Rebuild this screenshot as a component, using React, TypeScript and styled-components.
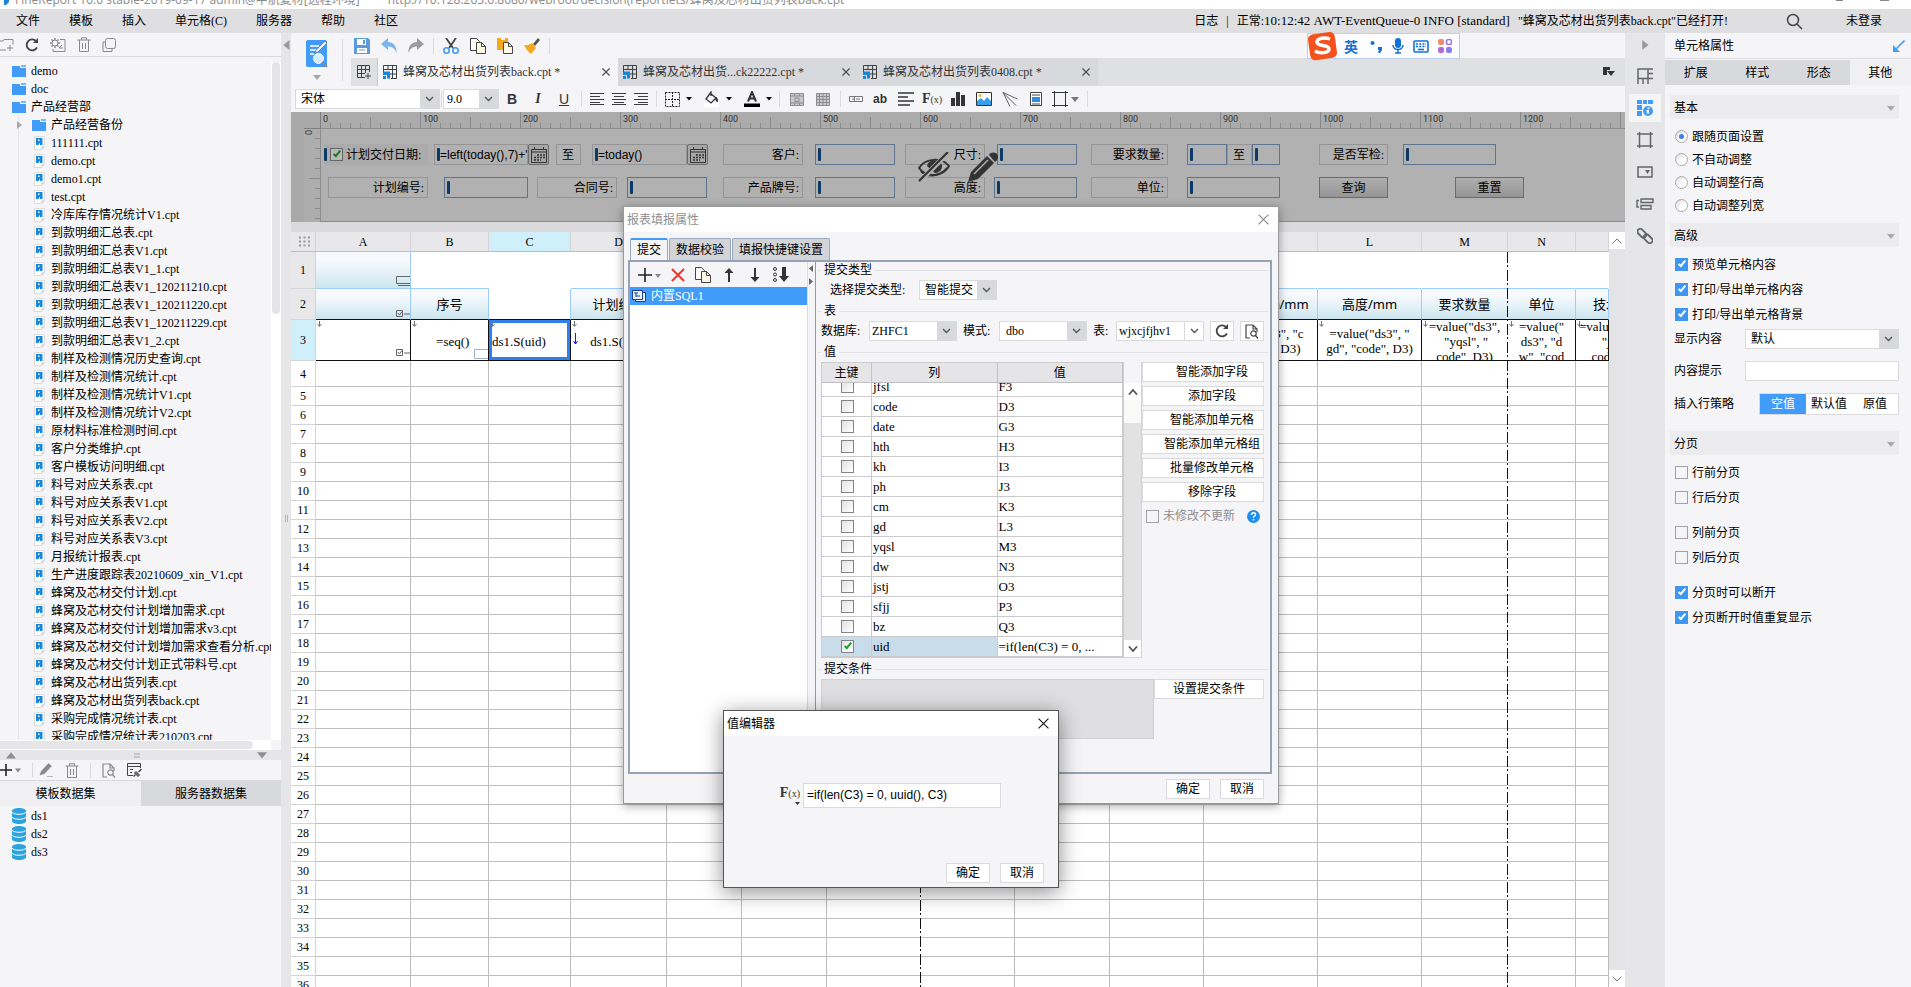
import React from "react";
import styled, { createGlobalStyle, css } from "styled-components";

const GlobalStyle = createGlobalStyle`
  *, *::before, *::after { box-sizing: border-box; }
  html, body { margin: 0; padding: 0; }
  body, button, input, select, textarea, table {
    font-family: "Liberation Serif", "Noto Sans CJK SC", sans-serif;
    font-size: 12px;
    line-height: 16px;
    color: #000;
  }
  button { background: none; border: 0; padding: 0; cursor: pointer; white-space: nowrap; }
  svg { display: block; flex: none; }
`;

const c = {
  panel: "#f5f5f7",
  bar: "#dfdfe1",
  strip: "#e6e6e8",
  tab: "#d8d9dd",
  line: "#dadadd",
  blue: "#419bf9",
  ink: "#333436",
};

/* ---------- page frame ---------- */

const Page = styled.div`
  position: relative;
  display: flex;
  flex-direction: column;
  height: 100vh;
  overflow: hidden;
  background: ${c.panel};
`;
const TitleBar = styled.header`
  flex: none;
  display: flex;
  align-items: flex-end;
  gap: 4px;
  height: 9px;
  overflow: hidden;
  background: #fff;
  color: #8b8b8b;
  font-family: "Open Sans", "Noto Sans CJK SC", sans-serif;
  white-space: pre;
  line-height: 18px;
`;
const TitleLogo = styled.svg`
  margin-bottom: 4px;
`;
const TitleText = styled.span`
  flex: 1;
`;
const WindowMarks = styled.svg`
  margin: 0 20px 7px 0;
`;
const MenuBar = styled.nav`
  flex: none;
  display: flex;
  align-items: center;
  height: 24px;
  padding: 0 29px 0 16px;
  background: ${c.bar};
`;
const MenuItem = styled.button`
  margin-right: 29px;
`;
const Log = styled.div`
  display: flex;
  gap: 8px;
  margin-left: auto;
  white-space: nowrap;
`;
const LogCode = styled.span`
  font-size: 13px;
`;
const SearchButton = styled.button`
  margin: 0 43px 0 58px;
`;
const Main = styled.main`
  flex: 1;
  display: flex;
  min-height: 0;
`;

/* ---------- left side ---------- */

const LeftSide = styled.aside`
  flex: none;
  display: flex;
  flex-direction: column;
  width: 281px;
`;
const LeftTools = styled.div`
  flex: none;
  display: flex;
  align-items: center;
  gap: 11px;
  height: 24px;
  border-bottom: 1px solid ${c.line};
  color: #8d8d8f;
`;
const TreeArea = styled.div`
  flex: 1;
  display: flex;
  min-height: 0;
  padding-top: 5px;
`;
const TreeList = styled.ul<{ $guide?: boolean }>`
  flex: 1;
  min-width: 0;
  margin: 0;
  padding: 0;
  list-style: none;
  overflow: hidden;
  background: ${(p) => (p.$guide ? "linear-gradient(#e6e6ea, #e6e6ea) 18px 54px / 1px 100% no-repeat" : "none")};
`;
const TreeRow = styled.li<{ $depth: number }>`
  display: flex;
  align-items: center;
  height: 18px;
  padding-left: ${(p) => (p.$depth ? 16 : 0)}px;
  white-space: nowrap;
`;
const TreeTwist = styled.span<{ $root?: boolean }>`
  flex: none;
  width: ${(p) => (p.$root ? 12 : 16)}px;
`;
const TreeName = styled.span`
  margin-left: 5px;
`;
const ScrollTrack = styled.div`
  flex: none;
  width: 10px;
  background: #fff;
`;
const ScrollThumb = styled.div`
  width: 8px;
  height: 252px;
  margin-left: 1px;
  border-radius: 4px;
  background: #e4e4e6;
`;
const HScroll = styled.div`
  flex: none;
  height: 10px;
  margin-right: 10px;
  background: #fff;
`;
const HThumb = styled.div`
  width: 253px;
  height: 8px;
  margin-top: 1px;
  border-radius: 0 4px 4px 0;
  background: #e6e6e8;
`;
const Splitter = styled.div`
  flex: none;
  display: flex;
  align-items: center;
  justify-content: space-between;
  height: 10px;
  padding: 0 14px 0 6px;
  background: #e6e6e8;
`;
const DataPane = styled.section`
  flex: none;
  height: 227px;
`;
const DataTools = styled.div`
  display: flex;
  align-items: center;
  height: 20px;
  gap: 11px;
  color: #8a8a8c;
`;
const DataTabs = styled.div`
  display: flex;
  height: 26px;
  border-top: 1px solid ${c.line};
  margin-bottom: 1px;
`;
const DataTab = styled.button<{ $off?: boolean }>`
  flex: ${(p) => (p.$off ? 145 : 136)};
  padding-right: ${(p) => (p.$off ? 0 : 10)}px;
  background: ${(p) => (p.$off ? c.tab : "#f0f0f2")};
`;
const Gutter = styled.div`
  flex: none;
  display: flex;
  flex-direction: column;
  align-items: center;
  width: 10px;
  padding-top: 7px;
  background: ${c.strip};
`;
const GutterGrip = styled.span`
  width: 3px;
  height: 7px;
  margin: auto 0;
  border: solid #b4b4b6;
  border-width: 0 1px;
`;

/* ---------- designer ---------- */

const Designer = styled.section`
  flex: 1;
  display: flex;
  flex-direction: column;
  min-width: 0;
  overflow: hidden;
`;
const TopTools = styled.div`
  flex: none;
  display: flex;
  height: 53px;
`;
const PreviewBlock = styled.div`
  flex: none;
  display: flex;
  flex-direction: column;
  align-items: center;
  gap: 6px;
  width: 52px;
  margin: 6px 8px 5px 0;
  border-right: 1px solid ${c.line};
`;
const TopRight = styled.div`
  flex: 1;
  min-width: 0;
`;
const ToolRow = styled.div`
  display: flex;
  align-items: center;
  gap: 11px;
  height: 25px;
  padding-left: 3px;
`;
const Sep = styled.span<{ $m?: number }>`
  flex: none;
  width: 1px;
  height: 16px;
  margin: 0 ${(p) => p.$m ?? 4}px;
  background: ${c.line};
`;
const TabStrip = styled.div`
  display: flex;
  height: 28px;
  background: #dfe0e2;
`;
const NewTab = styled.button`
  display: grid;
  place-items: center;
  width: 27px;
  border-right: 1px solid #c9cacd;
`;
const FileTab = styled.div<{ $active?: boolean }>`
  display: flex;
  align-items: center;
  gap: 6px;
  width: 240px;
  padding: 0 8px 0 5px;
  background: ${(p) => (p.$active ? c.panel : c.tab)};
  color: ${c.ink};
  white-space: nowrap;
`;
const FileTabClose = styled.button`
  display: grid;
  margin-left: auto;
`;
const TabMenu = styled.button`
  margin: 0 10px 0 auto;
`;
const FormatBar = styled.div`
  flex: none;
  display: flex;
  align-items: center;
  height: 26px;
  padding-left: 4px;
`;
const FormatButton = styled.button<{ $w?: number }>`
  flex: none;
  display: grid;
  place-items: center;
  width: ${(p) => p.$w ?? 26}px;
  height: 20px;
`;
const ArrowGroup = styled.span<{ $first?: boolean }>`
  display: flex;
  margin-left: ${(p) => (p.$first ? 0 : 6)}px;
`;
const Letter = styled.b<{ $kind?: "i" | "u" | "ab" }>`
  font-family: "Liberation Sans", sans-serif;
  font-size: 14px;
  color: ${c.ink};
  ${(p) => p.$kind === "i" && css`font-family: "Liberation Serif", serif; font-style: italic;`}
  ${(p) => p.$kind === "u" && css`font-weight: 400; text-decoration: underline;`}
  ${(p) => p.$kind === "ab" && css`font-size: 12px;`}
`;
const Fx = styled.span`
  font-family: "Liberation Serif", serif;
  font-size: 14px;
  font-weight: 700;
  color: ${c.ink};
  small { font-size: 10px; font-weight: 400; }
`;

/* ---------- combo box ---------- */

const ComboBox = styled.span<{ $w?: number }>`
  flex: none;
  display: flex;
  width: ${(p) => (p.$w ? p.$w + "px" : "auto")};
  height: 20px;
  border: 1px solid ${c.line};
  background: #fff;
`;
const ComboSelect = styled.select<{ $pad: number }>`
  flex: 1;
  width: 0;
  min-width: 0;
  appearance: none;
  border: 0;
  padding: 0 0 0 ${(p) => p.$pad}px;
  background: transparent;
  outline: 0;
`;
const ComboArrow = styled.span<{ $plain?: boolean }>`
  display: grid;
  place-items: center;
  width: 19px;
  background: ${(p) => (p.$plain ? "#fff" : c.tab)};
  border-left: ${(p) => (p.$plain ? "1px solid " + c.line : 0)};
`;
function Combo(p: { label: string; value: string; w?: number; pad?: number; plain?: boolean }) {
  return (
    <ComboBox $w={p.w}>
      <ComboSelect aria-label={p.label} $pad={p.pad ?? 5}>
        <option>{p.value}</option>
      </ComboSelect>
      <ComboArrow $plain={p.plain}>
        <svg width="9" height="6" viewBox="0 0 9 6" fill="none" stroke="#555" strokeWidth="1.4">
          <path d="M1 1l3.500 3.500L8 1" />
        </svg>
      </ComboArrow>
    </ComboBox>
  );
}

/* ---------- parameter panel ---------- */

const ParamPanel = styled.div`
  position: relative;
  flex: none;
  display: grid;
  grid-template: 17px 93px / 13px 17px 1fr;
  height: 110px;
  background: #a9a9a9;
`;
const RulerCorner = styled.div`
  grid-column: 2;
  border: solid #7e7e7e;
  border-width: 0 1px 1px 0;
`;
const TopRuler = styled.div`
  display: flex;
  overflow: hidden;
  min-width: 0;
  border-bottom: 1px solid #8d8d8d;
  font-family: "Roboto", sans-serif;
  font-size: 9px;
  line-height: 14px;
  color: #333;
  background-image:
    repeating-linear-gradient(90deg, #888 0 1px, transparent 1px 100px),
    repeating-linear-gradient(90deg, #8c8c8c 0 1px, transparent 1px 50px),
    repeating-linear-gradient(90deg, #8c8c8c 0 1px, transparent 1px 10px);
  background-size: 100% 16px, 100% 11px, 100% 5px;
  background-position: -1px 0, -1px 5px, -1px 11px;
  background-repeat: no-repeat;
  background-color: #ababab;
`;
const RulerLabel = styled.span`
  flex: none;
  width: 100px;
  padding-left: 2px;
`;
const SideRuler = styled.div`
  grid-column: 2;
  display: flex;
  justify-content: center;
  padding-right: 6px;
  font-family: "Roboto", sans-serif;
  font-size: 9px;
  line-height: 8px;
  color: #333;
  background:
    repeating-linear-gradient(#8c8c8c 0 1px, transparent 1px 10px) 100% 9px / 5px 100% no-repeat,
    repeating-linear-gradient(#8c8c8c 0 1px, transparent 1px 50px) 100% 49px / 11px 100% no-repeat #adadad;
  border-right: 1px solid #8d8d8d;
`;
const SideLabel = styled.span`
  writing-mode: vertical-rl;
  transform: rotate(180deg);
  height: 6px;
`;
const Canvas = styled.div`
  min-width: 0;
  overflow: hidden;
  padding-top: 15px;
  background: #b1b1b1;
  border-bottom: 1px solid #8a8a8a;
`;
const WidgetRow = styled.div`
  display: flex;
  height: 21px;
  margin-bottom: 12px;
`;
interface WidgetProps { $w: number; $gap?: number }
const widget = css<WidgetProps>`
  flex: none;
  width: ${(p) => p.$w}px;
  margin-left: ${(p) => p.$gap ?? 0}px;
`;
const WidgetLabel = styled.label<WidgetProps>`
  ${widget}
  padding-right: 3px;
  line-height: 20px;
  text-align: right;
  border: 1px solid #959595;
`;
const WidgetCheck = styled.label<WidgetProps>`
  ${widget}
  display: flex;
  align-items: center;
  gap: 3px;
  background: #ababab;
`;
const WidgetBox = styled.span<WidgetProps & { $soft?: boolean }>`
  ${widget}
  display: flex;
  align-items: center;
  border: 1px solid ${(p) => (p.$soft ? "#959595" : "#5f7491")};
  padding-left: 2px;
`;
const Anchor = styled.i`
  flex: none;
  width: 3px;
  height: 13px;
  border-radius: 1px;
  background: #0d3a66;
`;
const WidgetInput = styled.input`
  flex: 1;
  width: 0;
  min-width: 0;
  border: 0;
  padding: 0;
  background: transparent;
  font-family: "Liberation Sans", sans-serif;
  outline: 0;
`;
const DateButton = styled.button`
  flex: none;
  display: grid;
  place-items: center;
  width: 21px;
  border: 1px solid #6a6a6a;
  border-radius: 2px;
  background: #a6a6a6;
`;
const WidgetButton = styled.button<WidgetProps>`
  ${widget}
  border: 1px solid #6b6b6b;
  background: linear-gradient(#aeaeae, #959595);
`;
const HoverTools = styled.div`
  position: absolute;
  inset: 0;
  display: flex;
  align-items: center;
  justify-content: center;
  gap: 18px;
`;
function Field(p: { label: string; w: number; gap?: number; value?: string; soft?: boolean }) {
  return (
    <WidgetBox $w={p.w} $gap={p.gap} $soft={p.soft}>
      <Anchor />
      <WidgetInput aria-label={p.label} defaultValue={p.value} />
    </WidgetBox>
  );
}

/* ---------- tick boxes and radios ---------- */

const GreenCheck = styled.input`
  appearance: none;
  flex: none;
  display: block;
  width: 13px;
  height: 13px;
  margin: 0;
  border: 1px solid #858585;
  background: linear-gradient(135deg, #e2e2e2, #fff);
  &:checked::after {
    content: "";
    display: block;
    width: 4px;
    height: 8px;
    margin: 0 0 0 4px;
    border: solid #22a02c;
    border-width: 0 2px 2px 0;
    transform: rotate(40deg);
  }
`;
const MutedCheck = styled(GreenCheck)`
  border-color: #666;
  background: #b9b9b9;
  &:checked::after { border-color: #167a20; }
`;
const PanelCheck = styled.input`
  appearance: none;
  flex: none;
  width: 13px;
  height: 13px;
  margin: 0;
  border: 1px solid #a2a2a4;
  background: ${c.panel};
  &:checked { background: #3d97f2; border-color: #3d97f2; }
  &:checked::after {
    content: "";
    display: block;
    width: 4px;
    height: 8px;
    margin: 0 0 0 4px;
    border: solid #fff;
    border-width: 0 2px 2px 0;
    transform: rotate(40deg);
  }
`;
const PanelRadio = styled.input`
  appearance: none;
  flex: none;
  display: grid;
  place-items: center;
  width: 13px;
  height: 13px;
  margin: 0;
  border: 1px solid #a9a9a9;
  border-radius: 50%;
  background: linear-gradient(135deg, #dcdcdc, #fff 60%);
  &:checked::after {
    content: "";
    width: 5px;
    height: 5px;
    border-radius: 50%;
    background: #3b82ef;
  }
`;

/* ---------- sheet ---------- */

const SheetArea = styled.div`
  flex: 1;
  display: flex;
  min-height: 0;
  border-top: 10px solid #dadadd;
`;
const SheetView = styled.div`
  position: relative;
  flex: 1;
  min-width: 0;
  overflow: hidden;
  background: #fff;
`;
const Sheet = styled.table`
  width: 100%;
  table-layout: fixed;
  border-collapse: separate;
  border-spacing: 0;
  td, th { padding: 0; font-weight: 400; overflow: hidden; }
`;
const ColHead = styled.th<{ $hot?: boolean }>`
  height: 20px;
  border: solid #d4d4d6;
  border-width: 0 1px 1px 0;
  border-bottom-color: #bdbdbf;
  background: ${(p) => (p.$hot ? "#cfeffb" : "#e8e8ea")};
`;
const RowHead = styled.th<{ $h: number; $tone?: "gray" | "hot" }>`
  height: ${(p) => p.$h}px;
  border: solid #d4d4d6;
  border-width: 0 1px 1px 0;
  background: ${(p) => (p.$tone === "gray" ? "#e8e8ea" : p.$tone === "hot" ? "#cfeffb" : "#fff")};
`;
type CellKind = "grid" | "blank" | "title" | "code";
const Cell = styled.td<{ $kind: CellKind; $bottom?: string; $right?: string }>`
  position: relative;
  border: solid #bdbdbd;
  border-width: 0 1px 1px 0;
  text-align: center;
  white-space: pre;
  ${(p) => p.$kind === "blank" && css`border-color: #fff;`}
  ${(p) =>
    p.$kind === "title" &&
    css`
      border-color: #9fcdfb;
      background: linear-gradient(#f6fafe 20%, #e4f1f7 60%, #cbe5ee);
      font-family: "Noto Sans", "Noto Sans CJK SC", sans-serif;
      font-size: 13px;
    `}
  ${(p) =>
    p.$kind === "code" &&
    css`
      border-color: #111;
      font-size: 13px;
      line-height: 15px;
    `}
  ${(p) => p.$bottom && css`border-bottom-color: ${p.$bottom};`}
  ${(p) => p.$right && css`border-right-color: ${p.$right};`}
`;
const CodeText = styled.div<{ $align?: "left" | "center" }>`
  height: 40px;
  display: flex;
  align-items: center;
  justify-content: ${(p) => (p.$align === "left" ? "flex-start" : "center")};
  padding: 2px 3px 0;
  overflow: hidden;
`;
const CellMark = styled.span<{ $at: "tl" | "br" | "ml" }>`
  position: absolute;
  ${(p) => p.$at === "tl" && css`left: 1px; top: 1px;`}
  ${(p) => p.$at === "ml" && css`left: 2px; top: 13px;`}
  ${(p) => p.$at === "br" && css`right: 0; bottom: 1px;`}
`;
const Selection = styled.span`
  position: absolute;
  inset: 0;
  border: 3px solid #2f80ed;
`;
const PageBreak = styled.i<{ $x: number }>`
  position: absolute;
  left: ${(p) => p.$x}px;
  top: 20px;
  bottom: 0;
  width: 1px;
  background: repeating-linear-gradient(#111 0 11px, #fff 11px 13px, #111 13px 15px, #fff 15px 18px);
`;
const SheetScroll = styled.div`
  flex: none;
  display: flex;
  flex-direction: column;
  width: 16px;
  background: #e4e4e6;
`;
const ScrollButton = styled.button<{ $last?: boolean }>`
  display: grid;
  place-items: center;
  height: 17px;
  margin-top: ${(p) => (p.$last ? "auto" : 0)};
  background: #fff;
`;

/* ---------- right side ---------- */

const IconStrip = styled.nav`
  flex: none;
  display: flex;
  flex-direction: column;
  align-items: center;
  width: 40px;
  padding-top: 7px;
  background: ${c.strip};
`;
const StripButton = styled.button<{ $on?: boolean }>`
  display: grid;
  place-items: center;
  width: 32px;
  height: 28px;
  margin-top: 4px;
  background: ${(p) => (p.$on ? c.panel : "none")};
`;
const StripFold = styled.button`
  display: grid;
  margin-bottom: 8px;
`;
const Props = styled.aside`
  flex: none;
  width: 246px;
`;
const PropsHead = styled.h2`
  display: flex;
  align-items: center;
  justify-content: space-between;
  height: 26px;
  margin: 0 0 1px;
  padding: 0 6px 0 9px;
  border-bottom: 1px solid ${c.line};
  font-size: 12px;
  font-weight: 400;
`;
const PropsTabs = styled.div`
  display: flex;
  height: 25px;
`;
const PropsTab = styled.button<{ $on?: boolean }>`
  flex: 1;
  background: ${(p) => (p.$on ? "#f0f0f2" : c.tab)};
`;
const PropsBody = styled.div`
  padding: 10px 12px 0 5px;
`;
const GroupHead = styled.button`
  display: flex;
  align-items: center;
  justify-content: space-between;
  width: 100%;
  height: 24px;
  padding: 2px 4px 0;
  background: #ececee;
`;
const Stack = styled.div<{ $row: number; $top?: number; $bottom?: number }>`
  display: grid;
  grid-auto-rows: ${(p) => p.$row}px;
  align-items: center;
  padding: ${(p) => p.$top ?? 0}px 0 ${(p) => p.$bottom ?? 0}px 5px;
`;
const Option = styled.label`
  display: flex;
  align-items: center;
  gap: 4px;
`;
const FieldRow = styled.div<{ $split: number; $last?: boolean }>`
  display: grid;
  grid-template-columns: ${(p) => p.$split}px 1fr;
  align-items: center;
  height: 20px;
  margin-bottom: ${(p) => (p.$last ? 18 : 12)}px;
  padding-left: 4px;
`;
const TextInput = styled.input`
  width: 100%;
  height: 20px;
  border: 1px solid ${c.line};
  background: #fff;
  font-family: "Liberation Sans", sans-serif;
`;
const Segments = styled.div`
  display: flex;
  height: 22px;
  border: 1px solid ${c.line};
  background: #fff;
`;
const Segment = styled.button<{ $on?: boolean }>`
  flex: 1;
  background: ${(p) => (p.$on ? c.blue : "#fff")};
  color: ${(p) => (p.$on ? "#fff" : "#000")};
`;

/* ---------- input-method bar ---------- */

const ImeBar = styled.div`
  position: absolute;
  left: 1307px;
  top: 33px;
  display: flex;
  align-items: center;
  gap: 9px;
  width: 153px;
  height: 26px;
  border: 1px solid #bcd0ee;
  background: #fdfdff;
  color: #1271d8;
`;
const ImeLang = styled.b`
  font-family: "Noto Sans CJK SC", sans-serif;
  font-size: 14px;
  margin-right: 3px;
  margin-left: -3px;
`;

/* ---------- dialogs ---------- */

const Dialog = styled.section<{ $x: number; $y: number; $w: number; $h: number; $front?: boolean }>`
  position: absolute;
  left: ${(p) => p.$x}px;
  top: ${(p) => p.$y}px;
  display: flex;
  flex-direction: column;
  width: ${(p) => p.$w}px;
  height: ${(p) => p.$h}px;
  border: 1px solid ${(p) => (p.$front ? "#555" : "#9a9a9c")};
  background: ${c.panel};
  box-shadow: ${(p) => (p.$front ? "0 4px 20px rgba(0, 0, 0, 0.45)" : "0 2px 9px rgba(0, 0, 0, 0.35)")};
`;
const DialogTitle = styled.header<{ $dim?: boolean }>`
  flex: none;
  display: flex;
  align-items: center;
  justify-content: space-between;
  height: 25px;
  padding: 0 9px 0 3px;
  background: #fff;
  color: ${(p) => (p.$dim ? "#909090" : "#000")};
`;
const DialogTabs = styled.div`
  display: flex;
  align-items: flex-end;
  gap: 1px;
  height: 28px;
  padding-left: 6px;
`;
const DialogTab = styled.button<{ $on?: boolean }>`
  height: 22px;
  padding: 0 6px;
  border: 1px solid #9aa9bd;
  border-bottom: 0;
  border-radius: 2px 2px 0 0;
  background: ${(p) => (p.$on ? c.panel : "#d3d4d8")};
  ${(p) => p.$on && css`border-top: 2px solid ${c.blue};`}
`;
const DialogBody = styled.div`
  flex: 1;
  display: flex;
  min-height: 0;
  margin: 0 6px 0 4px;
  border: 2px solid #97a3b4;
`;
const ListSide = styled.div`
  flex: none;
  display: flex;
  flex-direction: column;
  width: 178px;
  border-right: 1px solid ${c.line};
`;
const ListTools = styled.div`
  display: flex;
  align-items: center;
  gap: 10px;
  height: 25px;
  padding-left: 8px;
`;
const ListBody = styled.div`
  flex: 1;
  background: #fff;
`;
const ListItem = styled.button`
  display: flex;
  align-items: center;
  gap: 5px;
  width: 100%;
  height: 18px;
  padding-left: 2px;
  background: ${c.blue};
  color: #fff;
`;
const ListSplit = styled.div`
  flex: none;
  width: 7px;
  padding-top: 3px;
`;
const FormSide = styled.div`
  flex: 1;
  min-width: 0;
  padding-top: 1px;
  border-left: 1px solid #96999e;
  overflow: hidden;
`;
const Legend = styled.h3`
  display: flex;
  align-items: center;
  gap: 3px;
  height: 14px;
  margin: 0 2px 3px 2px;
  font-size: 12px;
  line-height: 14px;
  font-weight: 400;
  &::before { content: ""; width: 3px; height: 1px; background: #e2e2e5; }
  &::after { content: ""; flex: 1; height: 1px; background: #e2e2e5; }
`;
const FormRow = styled.div<{ $indent: number }>`
  display: flex;
  align-items: center;
  height: 20px;
  margin-bottom: 4px;
  padding-left: ${(p) => p.$indent}px;
  white-space: nowrap;
`;
const FormLabel = styled.label<{ $w: number }>`
  flex: none;
  width: ${(p) => p.$w}px;
`;
const SmallButton = styled.button`
  flex: none;
  display: grid;
  place-items: center;
  width: 24px;
  height: 20px;
  margin-left: 6px;
  border: 1px solid ${c.line};
  background: #fff;
`;
const ValueArea = styled.div`
  display: flex;
  height: 296px;
  margin-bottom: 4px;
  padding: 0 6px 0 5px;
`;
const TableWrap = styled.div`
  flex: 1;
  display: flex;
  flex-direction: column;
  border: 1px solid #cdcdcf;
`;
const ValueTable = styled.table`
  width: 100%;
  table-layout: fixed;
  border-collapse: separate;
  border-spacing: 0;
  background: #fff;
`;
const RowsClip = styled.div`
  flex: 1;
  display: flex;
  flex-direction: column;
  justify-content: flex-end;
  min-height: 0;
  overflow: hidden;
`;
const ValueHead = styled.th`
  height: 20px;
  padding: 0;
  border-right: 1px solid #c2c2c4;
  border-bottom: 1px solid #c2c2c4;
  background: #e5e5e7;
  font-weight: 400;
`;
const ValueCell = styled.td<{ $sel?: boolean }>`
  height: 20px;
  padding: 0 0 0 1px;
  border: solid #cbcbcd;
  border-width: 0 1px 1px 0;
  background: ${(p) => (p.$sel ? "#c8dcea" : "#fff")};
  white-space: nowrap;
  overflow: hidden;
  font-size: 13px;
  input { margin: 0 auto; }
`;
const TableScroll = styled.div`
  flex: none;
  display: flex;
  flex-direction: column;
  width: 18px;
  padding-top: 21px;
  border: solid #d4d4d6;
  border-width: 0 1px 1px 0;
  background: linear-gradient(#f5f5f7 0 21px, #e2e2e2 21px);
`;
const TableThumb = styled.div`
  height: 23px;
  background: #f9f9f7;
`;
const ButtonColumn = styled.div`
  flex: none;
  display: flex;
  flex-direction: column;
  gap: 4px;
  width: 122px;
`;
const PlainButton = styled.button<{ $w?: number; $shift?: boolean }>`
  flex: none;
  width: ${(p) => (p.$w ? p.$w + "px" : "auto")};
  height: 20px;
  padding-left: ${(p) => (p.$shift ? 18 : 0)}px;
  border: 1px solid ${c.line};
  background: #fff;
`;
const NoChangeRow = styled.div`
  display: flex;
  align-items: center;
  gap: 12px;
  padding: 2px 0 0 4px;
  color: #909092;
`;
const ConditionRow = styled.div`
  display: flex;
  align-items: flex-start;
  padding: 0 6px 0 5px;
`;
const ConditionBox = styled.div`
  flex: 1;
  height: 60px;
  border: 1px solid #d0d0d2;
  background: #dfdfe1;
`;
const DialogFoot = styled.footer<{ $pad: number }>`
  flex: none;
  display: flex;
  justify-content: flex-end;
  gap: 10px;
  padding: 5px ${(p) => p.$pad}px 4px 0;
`;
const EditorBody = styled.div`
  flex: 1;
  display: flex;
  align-items: center;
  gap: 3px;
  padding: 0 57px 4px 58px;
`;
const EditorFx = styled.button`
  display: flex;
  flex-direction: column;
  align-items: flex-end;
  width: 18px;
`;
const FormulaInput = styled.input`
  flex: 1;
  min-width: 0;
  height: 25px;
  padding: 0 3px;
  border: 1px solid ${c.line};
  background: #fff;
  font-family: "Liberation Sans", sans-serif;
`;

/* ---------- icons ---------- */

const Svg = (p: { w?: number; h?: number; box?: string; s?: string; f?: string; sw?: number; children: React.ReactNode }) => (
  <svg width={p.w ?? 16} height={p.h ?? 16} viewBox={p.box ?? `0 0 ${p.w ?? 16} ${p.h ?? 16}`} fill={p.f ?? "none"} stroke={p.s ?? "none"} strokeWidth={p.sw ?? 1}>
    {p.children}
  </svg>
);
const Tri = ({ dir, color = "#8f8f91", big }: { dir: "up" | "down" | "left" | "right"; color?: string; big?: boolean }) => {
  const d = { up: "M0 6L4 1l4 5z", down: "M0 1h8L4 6z", left: "M6 0v8L1 4z", right: "M1 0v8l5-4z" }[dir];
  const flat = dir === "up" || dir === "down";
  const k = big ? 1.25 : 1;
  return (
    <svg width={(flat ? 8 : 7) * k} height={(flat ? 7 : 8) * k} viewBox={flat ? "0 0 8 7" : "0 0 7 8"} fill={color}>
      <path d={d} />
    </svg>
  );
};
const DropMark = () => (
  <Svg w={6} h={4} f="#111"><path d="M0 0h6L3 3.500z" /></Svg>
);
const FolderIcon = () => (
  <Svg w={14} h={12} f={c.blue}><path d="M0 1h8v2h6v9H0z" /><path d="M9 0h5v2H9z" fill="#79b9fb" /></Svg>
);
const FileIcon = () => (
  <Svg w={14} h={16}>
    <path d="M2.500 1.500h10v10l-3 3h-7z" fill="#fff" stroke="#dcdcdf" />
    <path d="M9.500 14.500v-3h3z" fill="#c9c9cc" />
    <path d="M4 3h6.500v7H8V7.500L6.500 10H4z" fill="#1787dc" />
    <path d="M6 4.500h1.500V6H6z" fill="#fff" />
  </Svg>
);
const DbIcon = () => (
  <Svg w={14} h={16} f="#2aa3e0">
    <path d="M0 3c0-4 14-4 14 0v10c0 4-14 4-14 0z" />
    <path d="M0 4c1 3 13 3 14 0M0 9c1 3 13 3 14 0" fill="none" stroke="#fff" strokeWidth="1" />
  </Svg>
);
const SheetIcon = () => (
  <Svg w={14} h={14} s="#3f4144">
    <path d="M.5 9V.5h13v13H8M.5 4.500h13M5 .5v4M9.500 .5V13M5.500 9h8" />
    <path d="M0 6.500h7v7H4V10H0zM0 11h3v3H0z" fill="#1b86d8" stroke="none" />
  </Svg>
);
const CloseIcon = ({ size = 8, color = "#555" }: { size?: number; color?: string }) => (
  <Svg w={size} h={size} box="0 0 10 10" s={color} sw={size > 9 ? 1 : 1.6}><path d="M.5.5l9 9M9.500.5l-9 9" /></Svg>
);
const CopyIcon = ({ paste }: { paste?: boolean }) => (
  <Svg>
    {paste ? (
      <path d="M0 0h4v2h4V0h3v12H0z" fill="#f5a81c" />
    ) : (
      <path d="M.5.5h6l3 3v9h-9z" fill="#fff" stroke="#444" />
    )}
    <path d="M6.500 4.500h5l4 4v7h-9z" fill="#fff7e2" stroke="#444" />
    <path d="M11.500 4.500v4h4" stroke="#444" />
  </Svg>
);
const TrashIcon = () => (
  <Svg w={14} h={15} s="#8a8a8c"><path d="M.5 3h13M4.500 3V.8h5V3M2.500 3v11.500h9V3M5.500 6v6M8.500 6v6" /></Svg>
);
const RefreshIcon = ({ size = 14 }: { size?: number }) => (
  <Svg w={size} h={size} box="0 0 14 14" s="#444" sw={1.8}>
    <path d="M11.500 3.500A5.500 5.500 0 1 0 12 9.500" /><path d="M13 0v5H8z" fill="#444" stroke="none" />
  </Svg>
);
const FileSearchIcon = ({ color = "#8a8a8c" }: { color?: string }) => (
  <Svg w={14} h={15} s={color} sw={1.2}>
    <path d="M5 14H1V1h7l4 4v3M8 1v4h4" /><circle cx="8.500" cy="9.500" r="2.700" /><path d="M10.500 11.500l2.500 3" />
  </Svg>
);
const Lines = ({ kind }: { kind: "l" | "c" | "r" }) => {
  const short = kind === "l" ? "0" : kind === "c" ? "2" : "4";
  return (
    <Svg w={14} h={12} s="#3c3d40">
      <path d={`M0 .5h14M${short} 3.500h10M0 6.500h14M${short} 9.500h10`} />
      <path d="M0 11.500h14" />
    </Svg>
  );
};
const TableIcon = ({ merged }: { merged?: boolean }) => (
  <Svg w={14} h={13} s="#8e8e90">
    <path d="M.5.5h13v12H.5z" fill="#c9c9cb" />
    {merged ? <path d="M.5 3h13M.5 10h13M4.500.5V3M9.500.5V3M4.500 10v2.500M9.500 10v2.500M5 5h4v3.500H5z" /> : <path d="M.5 3.500h13M.5 6.500h13M.5 9.500h13M3.500.5v12M7 .5v12M10.500.5v12" />}
  </Svg>
);
const CalendarIcon = () => (
  <Svg s="#333">
    <path d="M.5 2.500h15v13H.5zM.5 5h15M3.500 0v3M12.500 0v3" />
    <path d="M6 8h8M3 10.500h11M3 13h7" strokeWidth="1.600" strokeDasharray="2 1" />
  </Svg>
);

/* ---------- data ---------- */

const files = [
  "111111.cpt", "demo.cpt", "demo1.cpt", "test.cpt", "冷库库存情况统计V1.cpt", "到款明细汇总表.cpt",
  "到款明细汇总表V1.cpt", "到款明细汇总表V1_1.cpt", "到款明细汇总表V1_120211210.cpt",
  "到款明细汇总表V1_120211220.cpt", "到款明细汇总表V1_120211229.cpt", "到款明细汇总表V1_2.cpt",
  "制样及检测情况历史查询.cpt", "制样及检测情况统计.cpt", "制样及检测情况统计V1.cpt",
  "制样及检测情况统计V2.cpt", "原材料标准检测时间.cpt", "客户分类维护.cpt", "客户模板访问明细.cpt",
  "料号对应关系表.cpt", "料号对应关系表V1.cpt", "料号对应关系表V2.cpt", "料号对应关系表V3.cpt",
  "月报统计报表.cpt", "生产进度跟踪表20210609_xin_V1.cpt", "蜂窝及芯材交付计划.cpt",
  "蜂窝及芯材交付计划增加需求.cpt", "蜂窝及芯材交付计划增加需求v3.cpt",
  "蜂窝及芯材交付计划增加需求查看分析.cpt", "蜂窝及芯材交付计划正式带料号.cpt",
  "蜂窝及芯材出货列表.cpt", "蜂窝及芯材出货列表back.cpt", "采购完成情况统计表.cpt",
  "采购完成情况统计表210203.cpt",
];
const columns: [string, number?][] = [
  ["A", 95], ["B", 78], ["C", 82], ["D", 96], ["E", 75], ["F", 85], ["G", 94], ["H", 94],
  ["I", 95], ["J", 94], ["K", 114], ["L", 104], ["M", 86], ["N", 68], [""],
];
const titles: Record<string, string> = {
  B: "序号", D: "计划编号", K: "规格(长×宽)/mm", L: "高度/mm", M: "要求数量", N: "单位", "": "     技术条件",
};
const formulas: Record<string, string> = {
  B: "  =seq()",
  C: "ds1.S(uid)",
  D: "     ds1.S(",
  K: '=value("ds3", "c\nd", "code", D3)',
  L: '=value("ds3", "\ngd", "code", D3)',
  M: '=value("ds3",\n "yqsl", "\ncode", D3)',
  N: '=value("\nds3", "d\nw", "cod',
  "": '=value(\n      "js\n   code',
};
const fields = [
  ["jfsl", "F3"], ["code", "D3"], ["date", "G3"], ["hth", "H3"], ["kh", "I3"], ["ph", "J3"],
  ["cm", "K3"], ["gd", "L3"], ["yqsl", "M3"], ["dw", "N3"], ["jstj", "O3"], ["sfjj", "P3"],
  ["bz", "Q3"], ["uid", "=if(len(C3) = 0, ..."],
];

/* ---------- parts ---------- */

function LeftPanel() {
  return (
    <LeftSide>
      <LeftTools>
        <Svg w={14} h={14} s="#8a8a8c"><path d="M0 3h3l1-1.500h9v5M0 12h6M10 7v6M7 10h6" /></Svg>
        <RefreshIcon />
        <Svg w={16} h={14} s="#8a8a8c">
          <circle cx="5" cy="5" r="3" /><path d="M5 0v2M5 8v2M0 5h2M8 5h2M1.500 1.500l1.300 1.300M7.200 7.200l1.300 1.300M8.500 1.500L7.200 2.800M2.800 7.200L1.500 8.500" strokeWidth="1.400" />
          <path d="M10 1.500h5v12H3V11M9 10l3-3M9 10h4" />
        </Svg>
        <TrashIcon />
        <Svg w={14} h={14} s="#8a8a8c"><rect x="3.500" y=".5" width="10" height="10" rx="2" /><path d="M3 4H1v9.500h9V11" /></Svg>
      </LeftTools>
      <TreeArea>
        <TreeList $guide>
          {["demo", "doc", "产品经营部"].map((n) => (
            <TreeRow key={n} $depth={0}><TreeTwist $root /><FolderIcon /><TreeName>{n}</TreeName></TreeRow>
          ))}
          <TreeRow $depth={1}><TreeTwist><Tri dir="right" color="#a9a9ab" /></TreeTwist><FolderIcon /><TreeName>产品经营备份</TreeName></TreeRow>
          {files.map((n) => (
            <TreeRow key={n} $depth={1}><TreeTwist /><FileIcon /><TreeName>{n}</TreeName></TreeRow>
          ))}
        </TreeList>
        <ScrollTrack><ScrollThumb /></ScrollTrack>
      </TreeArea>
      <HScroll><HThumb /></HScroll>
      <Splitter>
        <Tri dir="up" big />
        <Svg w={6} h={5} s="#a5a5a7"><path d="M0 1h6M0 4h6" /></Svg>
        <Tri dir="down" big />
      </Splitter>
      <DataPane>
        <DataTools>
          <Svg w={21} h={14}><path d="M0 7h12M6 1v12" stroke="#222" strokeWidth="1.600" /><path d="M15 5.500h6l-3 4z" fill="#8a8a8c" /></Svg>
          <Svg w={22} h={14}>
            <path d="M.5 0v14" stroke={c.line} />
            <path d="M8 12l1.500-4 7-7.500 3 2.500-7 7.500zM15 13.500h6" fill="#8a8a8c" stroke="#8a8a8c" strokeWidth=".6" />
          </Svg>
          <TrashIcon />
          <Svg w={1} h={15} f={c.line}><path d="M0 0h1v15H0z" /></Svg>
          <FileSearchIcon />
          <Svg w={15} h={14} s="#444">
            <path d="M6 12.500H.5V.5h13V5M.5 3.500h13M3 6.500h3M3 9.500h2" />
            <path d="M14.500 6l-3 3M6.500 13.500l2-2" strokeWidth="1.300" /><path d="M9 8.500l3.500 3.500-1.500 1.500-3.500-3.500z" fill="#777" />
          </Svg>
        </DataTools>
        <DataTabs>
          <DataTab>模板数据集</DataTab>
          <DataTab $off>服务器数据集</DataTab>
        </DataTabs>
        <TreeList>
          {["ds1", "ds2", "ds3"].map((n) => (
            <TreeRow key={n} $depth={0}><TreeTwist $root /><DbIcon /><TreeName>{n}</TreeName></TreeRow>
          ))}
        </TreeList>
      </DataPane>
    </LeftSide>
  );
}

function Toolbars() {
  return (
    <>
      <TopTools>
        <PreviewBlock>
          <Svg w={22} h={29}>
            <rect y="1" width="21" height="27" rx="2" fill={c.blue} />
            <path d="M4 7h9M4 11h7M4 15h4" stroke="#fff" strokeWidth="1.600" />
            <path d="M9 14l1-3 9-9 2 2-9 9z" fill="#eee" stroke="#777" strokeWidth=".8" />
            <circle cx="12.500" cy="19.500" r="5" fill="#d7ecff" stroke="#fff" />
            <path d="M16 23l5 5" stroke="#888" strokeWidth="2" />
          </Svg>
          <Tri dir="down" color="#a5a5a7" />
        </PreviewBlock>
        <TopRight>
          <ToolRow>
            <Svg><path d="M0 0h14l2 2v14H0z" fill="#5b9bdc" /><path d="M3 1h9v6H3zM3 10h10v5H3z" fill="#fff" /><path d="M9 2h2v4H9z" fill="#5b9bdc" /><path d="M5 12h6" stroke="#5b9bdc" /></Svg>
            <Svg f="#7db4ec"><path d="M0 6l7-6v4c6 0 9 5 8.500 11C14 10.500 11 8.500 7 8.500V12z" /></Svg>
            <Svg f="#9c9c9e"><path d="M16 6L9 0v4C3 4 0 9 .5 15 2 10.500 5 8.500 9 8.500V12z" /></Svg>
            <Sep $m={-2} />
            <Svg><path d="M3 0l7 10M13 0L6 10" stroke="#444" strokeWidth="1.800" /><circle cx="3.500" cy="12.500" r="2.700" stroke={c.blue} strokeWidth="1.600" /><circle cx="12.500" cy="12.500" r="2.700" stroke={c.blue} strokeWidth="1.600" /></Svg>
            <CopyIcon />
            <CopyIcon paste />
            <Svg><path d="M9 6l5-6 2 2-5 6z" fill="#555" /><path d="M0 7c4 1 6-1 8-2l4 5c-2 2-3 4-5 6-3-2-5-5-7-9z" fill="#f5a81c" /></Svg>
            <Sep $m={-2} />
          </ToolRow>
          <TabStrip>
            <NewTab aria-label="新建模板">
              <Svg w={14} h={14} s="#3f4144"><path d="M8 12.500H.5V.5h12V7M.5 4.500h12M.5 8.500H8M4.500.5v12M8.500.5V8M11 8v6M8 11h6" /></Svg>
            </NewTab>
            {["蜂窝及芯材出货列表back.cpt *", "蜂窝及芯材出货...ck22222.cpt *", "蜂窝及芯材出货列表0408.cpt *"].map((t, i) => (
              <FileTab key={t} $active={i === 0}>
                <SheetIcon />
                {t}
                <FileTabClose aria-label="关闭"><CloseIcon /></FileTabClose>
              </FileTab>
            ))}
            <TabMenu aria-label="模板列表">
              <Svg w={12} h={10} f={c.ink}><path d="M0 0h7v3H4v5H0zM4 4h8L8 9z" /></Svg>
            </TabMenu>
          </TabStrip>
        </TopRight>
      </TopTools>
      <FormatBar>
        <Combo label="字体" value="宋体" w={145} />
        <Sep $m={1} />
        <Combo label="字号" value="9.0" w={56} pad={3} />
        <FormatButton><Letter>B</Letter></FormatButton>
        <FormatButton><Letter $kind="i">I</Letter></FormatButton>
        <FormatButton><Letter $kind="u">U</Letter></FormatButton>
        <Sep />
        <FormatButton $w={22}><Lines kind="l" /></FormatButton>
        <FormatButton $w={22}><Lines kind="c" /></FormatButton>
        <FormatButton $w={22}><Lines kind="r" /></FormatButton>
        <Sep />
        <ArrowGroup $first>
          <FormatButton $w={22}><Svg w={15} h={15} s="#222"><path d="M.5.5h14v14H.5zM7.500 0v15M0 7.500h15" strokeDasharray="2 1" /></Svg></FormatButton>
          <FormatButton $w={12}><DropMark /></FormatButton>
        </ArrowGroup>
        <ArrowGroup>
          <FormatButton $w={22}>
            <Svg w={16} h={16}><path d="M0 12h14v4H0z" fill="#fff" /><path d="M6 2l6 5-5 5-5-4 5-7v4" stroke={c.ink} strokeWidth="1.300" /><path d="M11 6c3 0 3 3 3 5-2 0-3-2-3-5z" fill={c.ink} /></Svg>
          </FormatButton>
          <FormatButton $w={12}><DropMark /></FormatButton>
        </ArrowGroup>
        <ArrowGroup>
          <FormatButton $w={22}>
            <Svg w={16} h={16}><path d="M0 12.500h16V16H0z" fill="#000" /><path d="M4 10.500L8 1l4 9.500M5.500 7.500h5" stroke={c.ink} strokeWidth="2" /></Svg>
          </FormatButton>
          <FormatButton $w={12}><DropMark /></FormatButton>
        </ArrowGroup>
        <Sep />
        <FormatButton><TableIcon merged /></FormatButton>
        <FormatButton><TableIcon /></FormatButton>
        <Sep />
        <FormatButton $w={22}><Svg w={14} h={6} s="#777"><path d="M.5.5h13v5H.5zM3 3h2M5.500.5v5M7 3h4" /></Svg></FormatButton>
        <FormatButton><Letter $kind="ab">ab</Letter></FormatButton>
        <FormatButton><Svg w={16} h={14} s={c.ink} sw={1.5}><path d="M0 1h16M0 5h10M0 9h16M0 13h12" /></Svg></FormatButton>
        <FormatButton><Fx>F<small>(x)</small></Fx></FormatButton>
        <FormatButton><Svg w={14} h={14} f={c.ink}><path d="M0 6h4v8H0zM5 0h4v14H5zM10 3h4v11h-4z" /></Svg></FormatButton>
        <FormatButton>
          <Svg w={16} h={14}><path d="M.5.5h15v13H.5z" fill="#fff" stroke="#333" /><path d="M1 13V9l4-3 3 3 3-4 4 4v4z" fill="#35a0ee" /><circle cx="4" cy="3.500" r="1.500" fill="#f8b62b" /></Svg>
        </FormatButton>
        <FormatButton><Svg w={16} h={15} s="#666" sw={1.2}><path d="M15.500 7L1 .5 8 14.500M1 .5l13 13" strokeWidth="1" /></Svg></FormatButton>
        <FormatButton>
          <Svg w={12} h={14}><path d="M.5.5h11v13H.5z" fill="#fff" stroke="#444" /><path d="M2 5h8v5H2z" fill="#2f8ee4" /><path d="M2 3h8M2 12h8" stroke="#444" /></Svg>
        </FormatButton>
        <FormatButton $w={22}><Svg w={16} h={16} s={c.ink}><path d="M2.500 0v16M13.500 0v16M0 1.500h16M0 14.500h16" /></Svg></FormatButton>
        <Tri dir="down" color="#777" />
        <Sep $m={8} />
      </FormatBar>
    </>
  );
}

function ParameterPanel() {
  return (
    <ParamPanel>
      <RulerCorner />
      <TopRuler>
        {Array.from({ length: 13 }, (_, i) => <RulerLabel key={i}>{i * 100}</RulerLabel>)}
      </TopRuler>
      <SideRuler><SideLabel>0</SideLabel></SideRuler>
      <Canvas>
        <WidgetRow>
          <WidgetCheck $w={104} $gap={3}>
            <Anchor />
            <MutedCheck type="checkbox" defaultChecked />
            计划交付日期:
          </WidgetCheck>
          <Field label="开始日期" w={94} gap={6} value="=left(today(),7)+'" soft />
          <DateButton aria-label="选择开始日期"><CalendarIcon /></DateButton>
          <WidgetLabel $w={25} $gap={7}>至&nbsp;</WidgetLabel>
          <Field label="结束日期" w={95} gap={11} value="=today()" soft />
          <DateButton aria-label="选择结束日期"><CalendarIcon /></DateButton>
          <WidgetLabel $w={80} $gap={15}>客户:</WidgetLabel>
          <Field label="客户" w={80} gap={12} />
          <WidgetLabel $w={80} $gap={10}>尺寸:</WidgetLabel>
          <Field label="尺寸" w={80} gap={12} />
          <WidgetLabel $w={77} $gap={14}>要求数量:</WidgetLabel>
          <Field label="要求数量下限" w={40} gap={19} />
          <WidgetLabel $w={25}>至&nbsp;</WidgetLabel>
          <Field label="要求数量上限" w={28} />
          <WidgetLabel $w={69} $gap={39}>是否军检:</WidgetLabel>
          <Field label="是否军检" w={93} gap={15} />
        </WidgetRow>
        <WidgetRow>
          <WidgetLabel $w={100} $gap={7}>计划编号:</WidgetLabel>
          <Field label="计划编号" w={84} gap={16} />
          <WidgetLabel $w={80} $gap={9}>合同号:</WidgetLabel>
          <Field label="合同号" w={80} gap={10} />
          <WidgetLabel $w={80} $gap={16}>产品牌号:</WidgetLabel>
          <Field label="产品牌号" w={80} gap={12} />
          <WidgetLabel $w={80} $gap={10}>高度:</WidgetLabel>
          <Field label="高度" w={83} gap={9} />
          <WidgetLabel $w={77} $gap={14}>单位:</WidgetLabel>
          <Field label="单位" w={93} gap={19} />
          <WidgetButton $w={69} $gap={39}>查询</WidgetButton>
          <WidgetButton $w={69} $gap={67}>重置</WidgetButton>
        </WidgetRow>
      </Canvas>
      <HoverTools>
        <Svg w={32} h={30}>
          <path d="M1 16C7 6 24 5 31 14 25 25 8 26 1 16z" stroke="#333" strokeWidth="2" />
          <path d="M9 14c1-7 14-8 15 0 0 4-3 7-7 7z" fill="#333" />
          <path d="M3 19c5 6 18 7 26-3" stroke="#333" strokeWidth="2" />
          <path d="M30 1L1 30" stroke="#b1b1b1" strokeWidth="5" />
          <path d="M30 0L1 29" stroke="#333" strokeWidth="2.200" />
        </Svg>
        <Svg w={30} h={30}>
          <path d="M0 30l3-10L19 4l7 7-16 16z" fill="#333" />
          <path d="M6 22L20 8" stroke="#b1b1b1" strokeWidth="1.500" />
          <path d="M21 3c2-4 10-3 9 3-.5 2-2 3-3 4z" fill="#333" />
        </Svg>
      </HoverTools>
    </ParamPanel>
  );
}

function Spreadsheet() {
  const small = Array.from({ length: 33 }, (_, i) => i + 4);
  return (
    <SheetArea>
      <SheetView>
        <Sheet>
          <colgroup>
            <col width={25} />
            {columns.map(([n, w]) => <col key={n} width={w} />)}
          </colgroup>
          <thead>
            <tr>
              <ColHead aria-label="全选">
                <Svg w={25} h={11} s="#9a9a9c" sw={2}><path d="M8 1.500h11M8 5.500h11M8 9.500h11" strokeDasharray="2 2.500" /></Svg>
              </ColHead>
              {columns.map(([n]) => <ColHead key={n} $hot={n === "C"}>{n}</ColHead>)}
            </tr>
          </thead>
          <tbody>
            <tr>
              <RowHead $h={37} $tone="gray">1</RowHead>
              {columns.map(([n]) => (
                <Cell key={n} $kind={n === "A" ? "title" : "blank"} $bottom={n === "C" ? undefined : "#9fcdfb"}>
                  {n === "A" && <CellMark $at="br"><Svg w={14} h={11} s="#666"><path d="M14 .5H.5v7H14M2 9.500h12" /></Svg></CellMark>}
                </Cell>
              ))}
            </tr>
            <tr>
              <RowHead $h={31} $tone="gray">2</RowHead>
              {columns.map(([n]) => (
                <Cell key={n} $kind={n === "C" ? "blank" : "title"} $bottom="#111" $right={n === "C" ? "#9fcdfb" : undefined}>
                  {titles[n]}
                  {n === "A" && <CellMark $at="br"><Svg w={14} h={8} s="#666"><path d="M.5.500h6v6h-6zM2 3l1.500 2L6 1.500M8 4h6" /></Svg></CellMark>}
                </Cell>
              ))}
            </tr>
            <tr>
              <RowHead $h={41} $tone="hot">3</RowHead>
              {columns.map(([n]) => (
                <Cell key={n} $kind="code">
                  <CodeText $align={n === "C" || n === "D" || n === "" ? "left" : "center"}>{formulas[n]}</CodeText>
                  <CellMark $at="tl"><Svg w={5} h={6} s="#777"><path d="M2.500 0v5M.5 3l2 2.500 2-2.500" /></Svg></CellMark>
                  {n === "A" && <CellMark $at="br"><Svg w={14} h={10} s="#666"><path d="M.5.500h6v6h-6zM2 3l1.500 2L6 1.500M8 4h6" /></Svg></CellMark>}
                  {n === "B" && <CellMark $at="br"><Svg w={14} h={10} s="#9fb2cc"><path d="M14 .5H.5v9H14" /></Svg></CellMark>}
                  {n === "C" && <Selection />}
                  {n === "D" && <CellMark $at="ml"><Svg w={5} h={12} s="#1414ff"><path d="M2.500 0v11M.5 8l2 3 2-3" /></Svg></CellMark>}
                </Cell>
              ))}
            </tr>
            {small.map((r) => (
              <tr key={r}>
                <RowHead $h={r === 4 ? 26 : 19}>{r}</RowHead>
                {columns.map(([n]) => <Cell key={n} $kind="grid" />)}
              </tr>
            ))}
          </tbody>
        </Sheet>
        <PageBreak $x={629} />
        <PageBreak $x={1216} />
      </SheetView>
      <SheetScroll>
        <ScrollButton aria-label="向上滚动"><Svg w={10} h={6} s="#777"><path d="M.5 5.500L5 1l4.500 4.500" /></Svg></ScrollButton>
        <ScrollButton $last aria-label="向下滚动"><Svg w={10} h={6} s="#777"><path d="M.5.500L5 5 9.500.5" /></Svg></ScrollButton>
      </SheetScroll>
    </SheetArea>
  );
}

const Tick = (p: { text: string; on?: boolean }) => (
  <Option><PanelCheck type="checkbox" defaultChecked={p.on} />{p.text}</Option>
);
const Group = ({ name }: { name: string }) => (
  <GroupHead>{name}<Tri dir="down" color="#a9a9ab" /></GroupHead>
);

function PropertyPanel() {
  const ink = "#62656b";
  return (
    <>
      <IconStrip>
        <StripFold aria-label="收起"><Tri dir="right" color="#9a9a9c" big /></StripFold>
        <StripButton aria-label="单元格元素"><Svg s={ink} sw={1.5}><path d="M1 16V1h15M1 10.500h15M11 1v15M11 5.500h5M6 10.500V16" /></Svg></StripButton>
        <StripButton $on aria-label="单元格属性">
          <Svg f={c.blue}><path d="M0 0h5v4H0zM6 0h4v4H6zM11 0h5v4h-5zM0 5h5v5H0zM0 11h5v5H0z" /><circle cx="11" cy="11" r="5" /><path d="M10.500 7.500h2v1.500h-2zM9.500 10h2.500v3.500h-2z" fill="#fff" /></Svg>
        </StripButton>
        <StripButton aria-label="悬浮元素"><Svg s={ink} sw={1.5}><path d="M2.500 0v16M13.500 0v16M0 2h16M0 14h16" /></Svg></StripButton>
        <StripButton aria-label="控件设置"><Svg w={16} h={12} s={ink} sw={1.5}><path d="M1 1h14v10H1z" /><path d="M8 4h5l-2.500 4z" fill={ink} stroke="none" /></Svg></StripButton>
        <StripButton aria-label="条件属性"><Svg w={18} h={12} s={ink} sw={1.4}><path d="M5 1h12v3.500H5zM5 7.500h10V11H5zM3 2.500H1V9h2" /></Svg></StripButton>
        <StripButton aria-label="超级链接">
          <Svg s={ink} sw={1.8}><rect x="0" y="2.500" width="10" height="5.500" rx="2.700" transform="rotate(45 5 5)" /><rect x="6" y="8" width="10" height="5.500" rx="2.700" transform="rotate(45 11 11)" /></Svg>
        </StripButton>
      </IconStrip>
      <Props>
        <PropsHead>
          单元格属性
          <Svg w={12} h={12} s={c.blue} sw={1.6}><path d="M11.500.5L3 9" /><path d="M0 12V5l7 7z" fill={c.blue} stroke="none" /></Svg>
        </PropsHead>
        <PropsTabs>
          <PropsTab>扩展</PropsTab><PropsTab>样式</PropsTab><PropsTab>形态</PropsTab><PropsTab $on>其他</PropsTab>
        </PropsTabs>
        <PropsBody>
          <Group name="基本" />
          <Stack $row={23} $top={6} $bottom={6}>
            {["跟随页面设置", "不自动调整", "自动调整行高", "自动调整列宽"].map((t, i) => (
              <Option key={t}><PanelRadio type="radio" name="autofit" defaultChecked={i === 0} />{t}</Option>
            ))}
          </Stack>
          <Group name="高级" />
          <Stack $row={25} $top={5} $bottom={2}>
            <Tick on text="预览单元格内容" />
            <Tick on text="打印/导出单元格内容" />
            <Tick on text="打印/导出单元格背景" />
          </Stack>
          <FieldRow $split={71}><span>显示内容</span><Combo label="显示内容" value="默认" /></FieldRow>
          <FieldRow $split={71}><label htmlFor="tip">内容提示</label><TextInput id="tip" /></FieldRow>
          <FieldRow $split={85} $last>
            <span>插入行策略</span>
            <Segments><Segment $on>空值</Segment><Segment>默认值</Segment><Segment>原值</Segment></Segments>
          </FieldRow>
          <Group name="分页" />
          <Stack $row={25} $top={5} $bottom={10}><Tick text="行前分页" /><Tick text="行后分页" /></Stack>
          <Stack $row={25} $bottom={10}><Tick text="列前分页" /><Tick text="列后分页" /></Stack>
          <Stack $row={25}><Tick on text="分页时可以断开" /><Tick on text="分页断开时值重复显示" /></Stack>
        </PropsBody>
      </Props>
    </>
  );
}

function SubmitDialog() {
  return (
    <Dialog role="dialog" aria-label="报表填报属性" $x={623} $y={206} $w={656} $h={598}>
      <DialogTitle $dim>报表填报属性<button aria-label="关闭"><CloseIcon size={11} color="#888" /></button></DialogTitle>
      <DialogTabs>
        <DialogTab $on>提交</DialogTab><DialogTab>数据校验</DialogTab><DialogTab>填报快捷键设置</DialogTab>
      </DialogTabs>
      <DialogBody>
        <ListSide>
          <ListTools>
            <Svg w={23} h={14}><path d="M0 7h14M7 0v14" stroke="#222" strokeWidth="1.600" /><path d="M17 6h6l-3 4z" fill="#8a8a8c" /></Svg>
            <Svg w={14} h={14} s="#e8392f" sw={2}><path d="M1 1l12 12M13 1L1 13" /></Svg>
            <CopyIcon />
            <Svg w={16} h={14} f={c.ink}><path d="M7 14V5H3.500L8 0l4.500 5H9v9z" /></Svg>
            <Svg w={16} h={14} f={c.ink}><path d="M7 0v9H3.500L8 14l4.500-5H9V0z" /></Svg>
            <Svg w={16} h={16} f={c.ink}><path d="M9 0h4v9h3l-5 6-5-6h3z" /><g fill="none" stroke={c.ink}><circle cx="2" cy="2" r="1.500" /><circle cx="2" cy="7.500" r="1.500" /><circle cx="2" cy="13" r="1.500" /></g></Svg>
          </ListTools>
          <ListBody>
            <ListItem>
              <Svg w={14} h={12}><path d="M3.500 2.500h10v9h-10z" fill="#e9f1ff" stroke="#1b3f94" /><path d="M.5.500h10v9H.5z" fill="#e9f1ff" stroke="#1b3f94" /><path d="M2 3h4M4 3v4M4 6h4" stroke="#1b3f94" /></Svg>
              内置SQL1
            </ListItem>
          </ListBody>
        </ListSide>
        <ListSplit><Svg w={6} h={22} f="#666"><path d="M5 0v7L1 3.500zM1 13v7l4-3.500z" /></Svg></ListSplit>
        <FormSide>
          <Legend>提交类型</Legend>
          <FormRow $indent={14}><FormLabel $w={89}>选择提交类型:</FormLabel><Combo label="选择提交类型" value="智能提交" w={78} /></FormRow>
          <Legend>表</Legend>
          <FormRow $indent={5}>
            <FormLabel $w={48}>数据库:</FormLabel><Combo label="数据库" value="ZHFC1" w={88} pad={2} />
            <FormLabel $w={42}>&nbsp; 模式:</FormLabel><Combo label="模式" value="dbo" w={88} pad={6} />
            <FormLabel $w={29}>&nbsp; 表:</FormLabel><Combo label="表" value="wjxcjfjhv1" w={88} pad={2} plain />
            <SmallButton aria-label="刷新"><RefreshIcon /></SmallButton>
            <SmallButton aria-label="预览"><FileSearchIcon color="#444" /></SmallButton>
          </FormRow>
          <Legend>值</Legend>
          <ValueArea>
            <TableWrap>
              <ValueTable>
                <colgroup><col width={50} /><col /><col /></colgroup>
                <thead><tr><ValueHead>主键</ValueHead><ValueHead>列</ValueHead><ValueHead>值</ValueHead></tr></thead>
              </ValueTable>
              <RowsClip>
                <ValueTable>
                  <colgroup><col width={50} /><col /><col /></colgroup>
                  <tbody>
                    {fields.map(([name, value]) => (
                      <tr key={name}>
                        <ValueCell $sel={name === "uid"}><GreenCheck type="checkbox" aria-label={name} defaultChecked={name === "uid"} /></ValueCell>
                        <ValueCell $sel={name === "uid"}>{name}</ValueCell>
                        <ValueCell>{value}</ValueCell>
                      </tr>
                    ))}
                  </tbody>
                </ValueTable>
              </RowsClip>
            </TableWrap>
            <TableScroll>
              <ScrollButton aria-label="向上滚动"><Svg w={10} h={6} s="#555" sw={1.8}><path d="M1 5.500L5 1l4 4.500" /></Svg></ScrollButton>
              <TableThumb />
              <ScrollButton $last aria-label="向下滚动"><Svg w={10} h={6} s="#555" sw={1.8}><path d="M1 .5L5 5 9 .5" /></Svg></ScrollButton>
            </TableScroll>
            <ButtonColumn>
              {["智能添加字段", "添加字段", "智能添加单元格", "智能添加单元格组", "批量修改单元格", "移除字段"].map((t) => (
                <PlainButton key={t} $shift>{t}</PlainButton>
              ))}
              <NoChangeRow>
                <Option><PanelCheck type="checkbox" disabled />未修改不更新</Option>
                <Svg w={13} h={13}><circle cx="6.500" cy="6.500" r="6.500" fill="#1b8ff0" /><path d="M4.500 5c0-3 4-3 4-.5 0 1.500-2 1.500-2 3.200M6.500 9v1.500" stroke="#fff" strokeWidth="1.400" /></Svg>
              </NoChangeRow>
            </ButtonColumn>
          </ValueArea>
          <Legend>提交条件</Legend>
          <ConditionRow><ConditionBox /><PlainButton $w={110}>设置提交条件</PlainButton></ConditionRow>
        </FormSide>
      </DialogBody>
      <DialogFoot $pad={14}><PlainButton $w={44}>确定</PlainButton><PlainButton $w={44}>取消</PlainButton></DialogFoot>
    </Dialog>
  );
}

function ValueEditor() {
  return (
    <Dialog role="dialog" aria-label="值编辑器" $front $x={723} $y={710} $w={336} $h={178}>
      <DialogTitle>值编辑器<button aria-label="关闭"><CloseIcon size={11} color="#111" /></button></DialogTitle>
      <EditorBody>
        <EditorFx aria-label="公式"><Fx>F<small>(x)</small></Fx><Svg w={5} h={3} f={c.ink}><path d="M0 0h5L2.500 3z" /></Svg></EditorFx>
        <FormulaInput aria-label="公式内容" defaultValue="=if(len(C3) = 0, uuid(), C3)" />
      </EditorBody>
      <DialogFoot $pad={14}><PlainButton $w={44}>确定</PlainButton><PlainButton $w={44}>取消</PlainButton></DialogFoot>
    </Dialog>
  );
}

export default function App() {
  return (
    <Page>
      <GlobalStyle />
      <TitleBar>
        <TitleLogo width="11" height="5" viewBox="0 0 11 5" fill="#1b86d8"><path d="M4 0h5v2L6 5H4z" /></TitleLogo>
        <TitleText>{"FineReport 10.0 stable-2019-09-17 admin@中航复材[远程环境]         http://10.128.203.6:8080/webroot/decision(reportlets/蜂窝及芯材出货列表back.cpt"}</TitleText>
        <WindowMarks width="60" height="2" viewBox="0 0 60 2" fill="#888"><path d="M5 0h7v1H5zM49 0h9v1h-9z" /></WindowMarks>
      </TitleBar>
      <MenuBar>
        {["文件", "模板", "插入", "单元格(C)", "服务器", "帮助", "社区"].map((m) => <MenuItem key={m}>{m}</MenuItem>)}
        <Log>
          <span>日志</span><span>|</span>
          <span>正常:<LogCode>10:12:42 AWT-EventQueue-0 INFO [standard]</LogCode></span>
          <span>"蜂窝及芯材出货列表back.cpt"已经打开!</span>
        </Log>
        <SearchButton aria-label="搜索"><Svg w={17} h={17} s="#444" sw={1.5}><circle cx="7" cy="7" r="5.500" /><path d="M11 11l5 5" /></Svg></SearchButton>
        <button>未登录</button>
      </MenuBar>
      <Main>
        <LeftPanel />
        <Gutter><Tri dir="left" color="#9a9a9c" big /><GutterGrip /></Gutter>
        <Designer>
          <Toolbars />
          <ParameterPanel />
          <Spreadsheet />
        </Designer>
        <PropertyPanel />
      </Main>
      <ImeBar>
        <Svg w={30} h={30}>
          <rect x="1" y="2" width="27" height="26" rx="5" fill="#f4511e" transform="rotate(-8 15 15)" />
          <path d="M22 8c-5-2-13-1-13 3 0 5 12 2 12 7 0 4-9 5-14 2" stroke="#fff" strokeWidth="3.500" />
        </Svg>
        <ImeLang>英</ImeLang>
        <Svg w={13} h={14} f="#1271d8"><circle cx="2.500" cy="4" r="2" /><path d="M8 8h4v3l-2 3H8l1-3H8z" /></Svg>
        <Svg w={12} h={16} f="#1271d8"><rect x="3" y="0" width="6" height="10" rx="3" /><path d="M1 7c0 6 10 6 10 0M6 11v4M3 15h6" fill="none" stroke="#1271d8" strokeWidth="1.500" /></Svg>
        <Svg w={16} h={13} s="#1271d8" sw={1.6}><rect x="1" y="1" width="14" height="11" rx="1" /><path d="M3 4h10M3 6.500h10" strokeDasharray="2 1.200" /><path d="M5 9.500h6" /></Svg>
        <Svg w={14} h={14}><rect width="6" height="6" rx="2" fill="#f08a6a" /><rect x="8.500" y=".500" width="5" height="5" rx="2" stroke="#9a6ee8" strokeWidth="1.500" /><rect y="8" width="6" height="6" rx="2" fill="#b06ad8" /><rect x="8" y="8" width="6" height="6" rx="2" fill="#8a7cf0" /></Svg>
      </ImeBar>
      <SubmitDialog />
      <ValueEditor />
    </Page>
  );
}
